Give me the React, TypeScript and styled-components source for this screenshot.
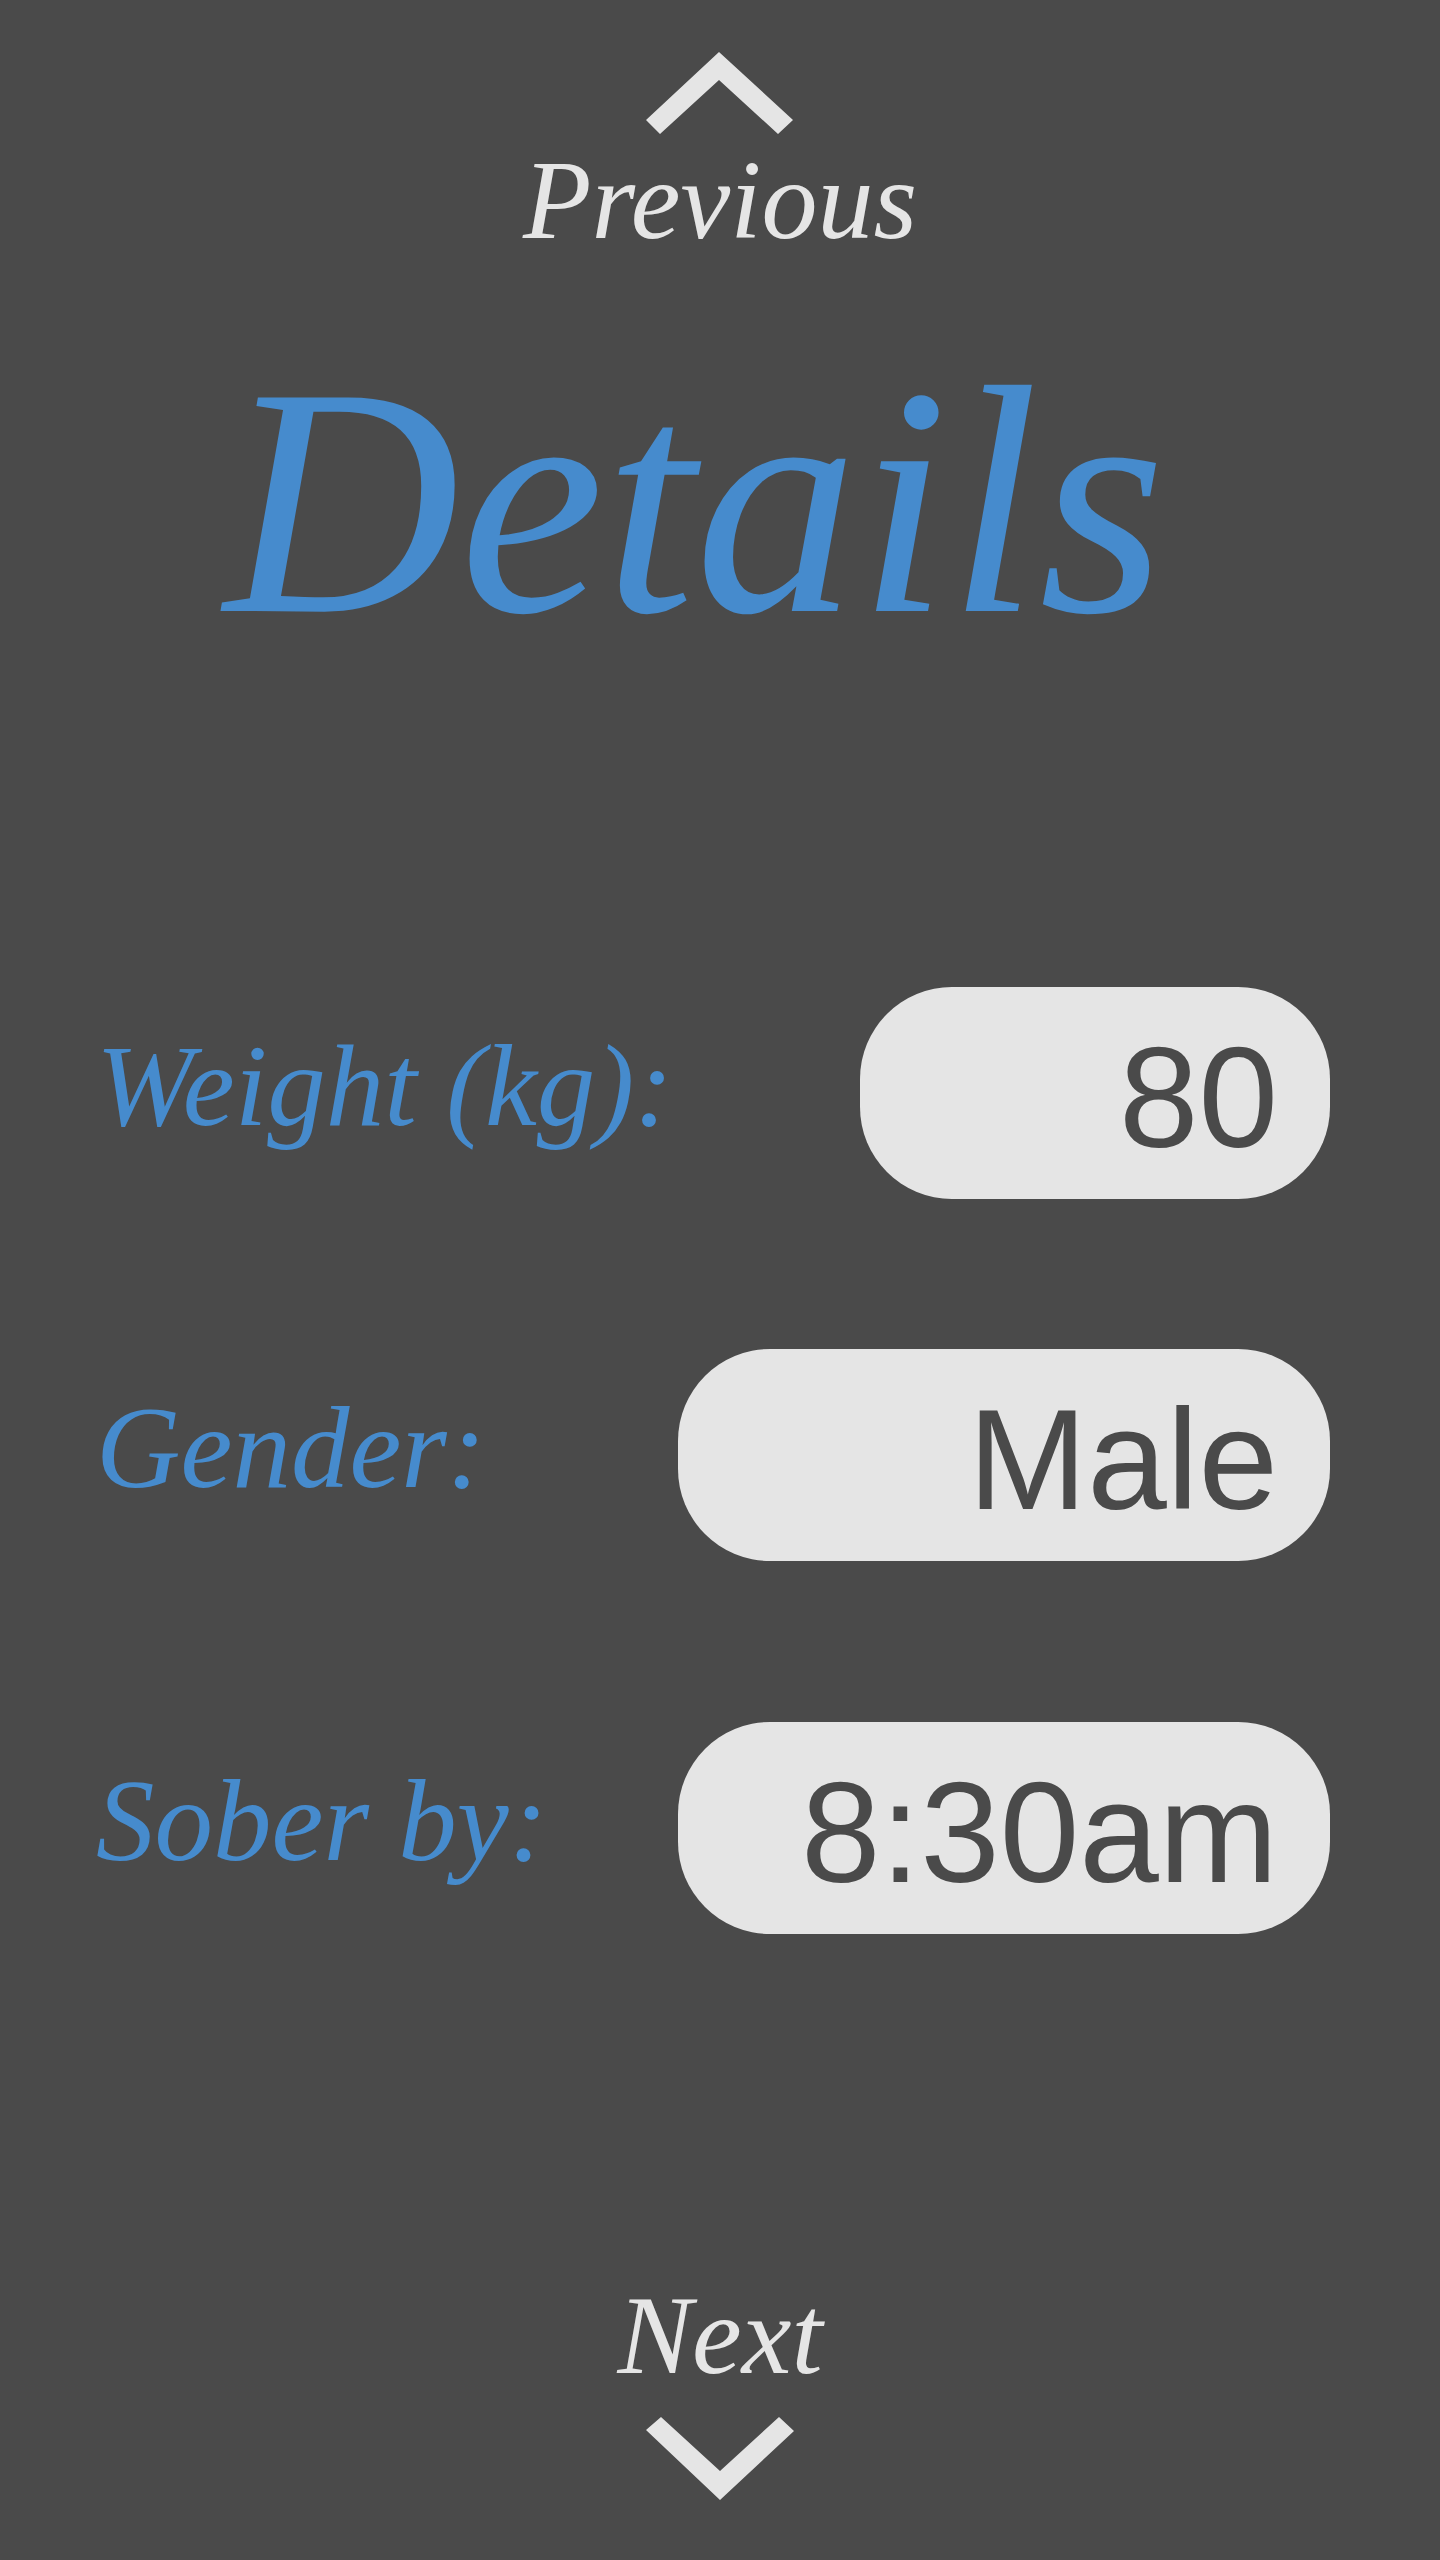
import React from "react";
import styled, { createGlobalStyle } from "styled-components";

const GlobalStyle = createGlobalStyle`
  html, body {
    margin: 0;
    padding: 0;
    background: #4a4a4a;
  }
  * { box-sizing: border-box; }
`;

const Page = styled.main`
  height: 2560px;
  display: flex;
  flex-direction: column;
  padding: 52px 0 60px;
  background: #4a4a4a;
`;

const Nav = styled.nav`
  display: flex;
  flex-direction: column;
  align-items: center;
`;

const NavLabel = styled.a<{ $gapTop?: number }>`
  display: block;
  margin-top: ${(p) => p.$gapTop ?? 0}px;
  font-family: "Liberation Serif", "Times New Roman", serif;
  font-style: italic;
  font-size: 112px;
  line-height: 1;
  color: #e5e5e5;
  text-decoration: none;
  cursor: pointer;
`;

const Chevron = styled.svg<{ $gapTop?: number }>`
  display: block;
  width: 148px;
  height: 83px;
  margin-top: ${(p) => p.$gapTop ?? 0}px;
  fill: #e5e5e5;
`;

const Title = styled.h1`
  margin: 82px 0 0;
  padding-right: 50px;
  text-align: center;
  font-family: "Liberation Serif", "Times New Roman", serif;
  font-style: italic;
  font-weight: normal;
  font-size: 326px;
  line-height: 1;
  color: #468bcd;
`;

const Form = styled.form`
  margin-top: 323px;
  padding: 0 110px 0 96px;
  display: flex;
  flex-direction: column;
`;

const Row = styled.div<{ $spaceBefore: number }>`
  display: flex;
  align-items: center;
  justify-content: space-between;
  margin-top: ${(p) => p.$spaceBefore}px;
`;

const Label = styled.label`
  margin-bottom: 16px;
  font-family: "Liberation Serif", "Times New Roman", serif;
  font-style: italic;
  font-size: 117px;
  line-height: 1;
  color: #468bcd;
  white-space: nowrap;
`;

const Pill = styled.div<{ $width: number }>`
  width: ${(p) => p.$width}px;
  height: 212px;
  border-radius: 92px;
  background: #e5e5e5;
  display: flex;
  align-items: center;
  justify-content: flex-end;
  padding: 8px 52px 0 40px;
  font-family: "Liberation Sans", Arial, sans-serif;
  font-size: 143px;
  line-height: 1;
  color: #4a4a4a;
  white-space: nowrap;
`;

const Spacer = styled.div`
  flex: 1;
`;

const UpChevron = () => (
  <Chevron viewBox="0 0 148 83" aria-hidden>
    <polygon points="73,0 147,68 132,82 73,28 14,82 0,68" />
  </Chevron>
);

const DownChevron = () => (
  <Chevron viewBox="0 0 148 83" $gapTop={26} aria-hidden>
    <polygon points="15,0 74,54 133,0 148,14 74,83 0,13" />
  </Chevron>
);

const fields = [
  { label: "Weight (kg):", value: "80", width: 470, spaceBefore: 0 },
  { label: "Gender:", value: "Male", width: 652, spaceBefore: 150 },
  { label: "Sober by:", value: "8:30am", width: 652, spaceBefore: 161 },
];

export default function App() {
  return (
    <>
      <GlobalStyle />
      <Page>
        <Nav>
          <UpChevron />
          <NavLabel $gapTop={9}>Previous</NavLabel>
        </Nav>
        <Title>Details</Title>
        <Form>
          {fields.map((f) => (
            <Row key={f.label} $spaceBefore={f.spaceBefore}>
              <Label>{f.label}</Label>
              <Pill $width={f.width}>{f.value}</Pill>
            </Row>
          ))}
        </Form>
        <Spacer />
        <Nav>
          <NavLabel>Next</NavLabel>
          <DownChevron />
        </Nav>
      </Page>
    </>
  );
}
